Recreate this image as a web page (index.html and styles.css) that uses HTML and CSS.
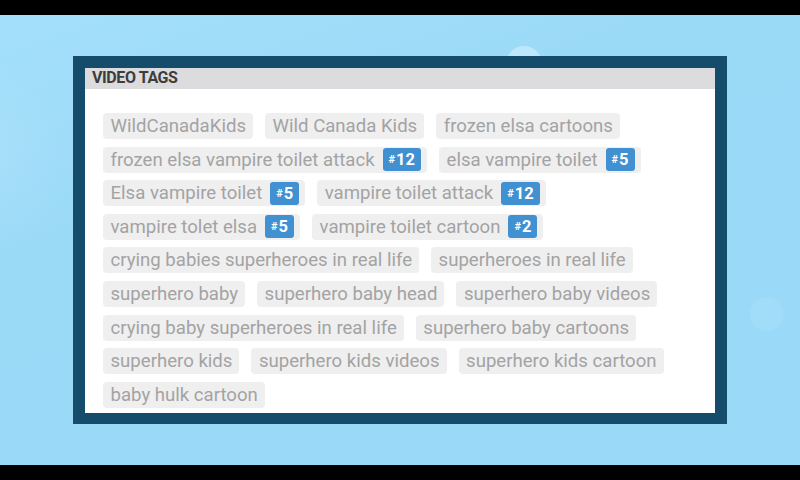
FILE: index.html
```html
<!DOCTYPE html>
<html lang="en">
<head>
    <meta charset="UTF-8">
    <meta name="viewport" content="width=device-width, initial-scale=1.0">
    <title>Video Tags</title>
    <link rel="stylesheet" href="styles.css">
</head>
<body>
    <div class="screen">
        <div class="bar"></div>
        <div class="stage">
            <div class="blob blob-top"></div>
            <div class="blob blob-right"></div>
            <div class="blob blob-left"></div>
            <div class="frame">
                <div class="panel">
                    <div class="panel-title">VIDEO TAGS</div>
                    <div class="tags">
                        <span class="tag">WildCanadaKids</span>
                        <span class="tag">Wild Canada Kids</span>
                        <span class="tag">frozen elsa cartoons</span>
                        <span class="tag">frozen elsa vampire toilet attack<span class="rank"><i>#</i>12</span></span>
                        <span class="tag">elsa vampire toilet<span class="rank"><i>#</i>5</span></span>
                        <span class="tag">Elsa vampire toilet<span class="rank"><i>#</i>5</span></span>
                        <span class="tag">vampire toilet attack<span class="rank"><i>#</i>12</span></span>
                        <span class="tag">vampire tolet elsa<span class="rank"><i>#</i>5</span></span>
                        <span class="tag">vampire toilet cartoon<span class="rank"><i>#</i>2</span></span>
                        <span class="tag">crying babies superheroes in real life</span>
                        <span class="tag">superheroes in real life</span>
                        <span class="tag">superhero baby</span>
                        <span class="tag">superhero baby head</span>
                        <span class="tag">superhero baby videos</span>
                        <span class="tag">crying baby superheroes in real life</span>
                        <span class="tag">superhero baby cartoons</span>
                        <span class="tag">superhero kids</span>
                        <span class="tag">superhero kids videos</span>
                        <span class="tag">superhero kids cartoon</span>
                        <span class="tag">baby hulk cartoon</span>
                    </div>
                </div>
            </div>
        </div>
        <div class="bar"></div>
    </div>
</body>
</html>
```

FILE: styles.css
```css
body {
    margin: 0;
    background: #000;
    font-family: 'Roboto', 'Liberation Sans', sans-serif;
}
.screen {
    width: 800px;
    height: 480px;
    display: flex;
    flex-direction: column;
    overflow: hidden;
}
.bar {
    height: 15px;
    background: #000;
    flex: none;
}
.stage {
    position: relative;
    flex: 1;
    background: linear-gradient(160deg, #a3dffa 0%, #9bdaf7 35%, #9ad9f7 100%);
    padding: 41px 0 0 73px;
    overflow: hidden;
}
.blob {
    position: absolute;
    border-radius: 50%;
}
.blob-top {
    left: 506px;
    top: 31px;
    width: 36px;
    height: 36px;
    background: #bde7fb;
}
.blob-right {
    left: 750px;
    top: 282px;
    width: 34px;
    height: 34px;
    background: #a1dcf9;
}
.blob-left {
    left: -90px;
    top: 40px;
    width: 160px;
    height: 200px;
    background: radial-gradient(closest-side, rgba(255, 255, 255, 0.08), rgba(255, 255, 255, 0));
}
.frame {
    position: relative;
    width: 630px;
    border: 12px solid #164c6b;
    border-bottom-width: 11px;
    background: #fff;
}
.panel-title {
    background: #dcdbdd;
    color: #3d3d3d;
    font-weight: 700;
    font-size: 16px;
    letter-spacing: -0.4px;
    line-height: 18px;
    padding: 1px 7px 2px;
}
.tags {
    display: flex;
    flex-wrap: wrap;
    gap: 7.6px 12px;
    padding: 24px 18px 5px 18px;
}
.tag {
    display: inline-flex;
    align-items: center;
    height: 26px;
    padding: 0 7px 0 7.5px;
    border-radius: 4px;
    background: #efeff0;
    color: #a3a3a3;
    font-size: 18.6px;
    white-space: pre;
}
.rank {
    display: inline-flex;
    align-items: center;
    height: 23px;
    margin-left: 8px;
    margin-right: -1px;
    padding: 0 6px;
    border-radius: 3px;
    background: #4190d2;
    color: #fff;
    font-weight: 700;
    font-size: 16.5px;
}
.rank i {
    font-style: normal;
    font-size: 11px;
    margin-right: 1px;
}
```
